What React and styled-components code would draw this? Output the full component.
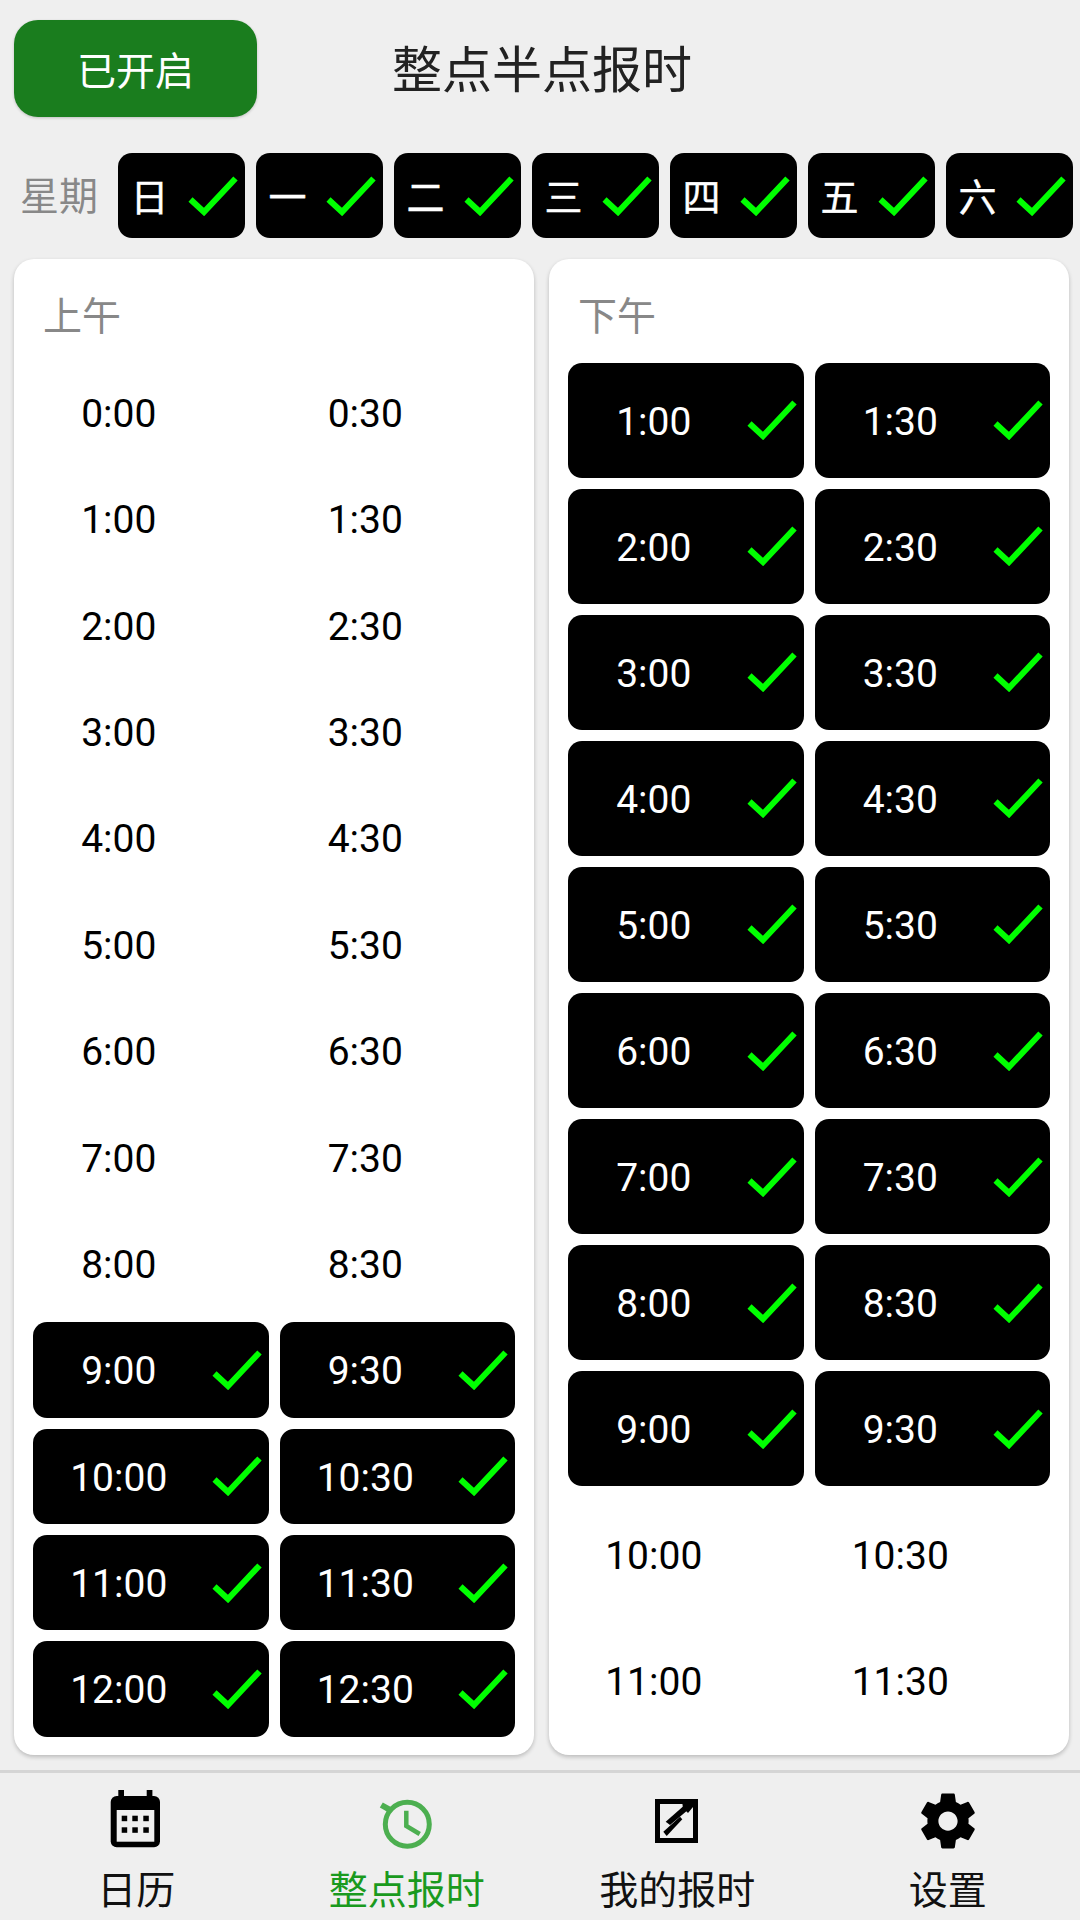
import React from 'react';
import styled, { createGlobalStyle } from 'styled-components';

const FONT = `Roboto, "Noto Sans CJK SC", sans-serif`;

const Global = createGlobalStyle`
  html, body { margin: 0; padding: 0; background: #efefef; }
  * { box-sizing: border-box; }
`;

const Page = styled.div`
  width: 1080px;
  height: 1920px;
  background: #efefef;
  font-family: ${FONT};
  display: flex;
  flex-direction: column;
  overflow: hidden;
`;

const Header = styled.header`
  display: flex;
  align-items: center;
  padding: 20px 0 0 14px;
`;

const StatusButton = styled.div`
  width: 243px;
  height: 97px;
  border-radius: 24px;
  background: #1a7d1e;
  color: #fff;
  font-size: 39px;
  display: flex;
  align-items: center;
  justify-content: center;
  padding-bottom: 2px;
  box-shadow: 0 1px 3px rgba(0, 0, 0, 0.2);
`;

const Title = styled.h1`
  margin: 0 0 0 135px;
  padding-top: 4px;
  font-size: 50px;
  line-height: 60px;
  font-weight: 400;
  color: #222;
`;

const WeekRow = styled.div`
  display: flex;
  align-items: center;
  margin-top: 36px;
  padding-left: 20px;
`;

const WeekLabel = styled.div`
  width: 98px;
  font-size: 39px;
  color: #888;
  padding-bottom: 5px;
`;

const WeekCells = styled.div`
  display: flex;
  gap: 11px;
`;

const WeekCell = styled.div`
  width: 127px;
  height: 85px;
  border-radius: 14px;
  background: #000;
  color: #fff;
  display: flex;
  align-items: center;
`;

const WeekText = styled.span`
  flex: 1;
  text-align: center;
  font-size: 38px;
  padding-bottom: 2px;
  -webkit-text-stroke: 0.4px #fff;
`;

const CheckSlot = styled.div`
  width: 64px;
  flex: none;
  display: flex;
  align-items: center;
  justify-content: flex-end;
  padding-right: 7px;
`;

const Columns = styled.main`
  display: grid;
  grid-template-columns: 520px 520px;
  gap: 15px;
  margin-top: 21px;
  padding-left: 14px;
`;

const Card = styled.section`
  height: 1496px;
  background: #fff;
  border-radius: 20px;
  box-shadow: 0 2px 4px rgba(0, 0, 0, 0.22);
  padding: 34px 19px 0;
`;

const CardLabel = styled.div`
  font-size: 39px;
  line-height: 46px;
  color: #888;
  padding-left: 10px;
  padding-top: 1px;
  margin-bottom: ${(p) => p.$gap}px;
`;

const TimeGrid = styled.div`
  display: grid;
  grid-template-columns: 1fr 1fr;
  grid-auto-rows: ${(p) => p.$rowHeight}px;
  gap: 11px;
`;

const TimeCell = styled.div`
  display: flex;
  align-items: center;
  border-radius: 14px;
  font-size: 39px;
  background: ${(p) => (p.$on ? '#000' : 'transparent')};
  color: ${(p) => (p.$on ? '#fff' : '#000')};
`;

const TimeText = styled.span`
  flex: 1;
  text-align: center;
  padding-top: 3px;
`;

const Nav = styled.nav`
  margin-top: 15px;
  height: 150px;
  border-top: 3px solid #d5d5d5;
  display: grid;
  grid-template-columns: repeat(4, 270.5px);
  padding-left: 1px;
`;

const NavItem = styled.div`
  display: flex;
  flex-direction: column;
  align-items: center;
  padding-top: 15px;
  color: ${(p) => (p.$active ? '#1a9a1e' : '#111')};
`;

const NavIcon = styled.svg`
  width: 66px;
  height: 66px;
  display: block;
`;

const NavLabel = styled.span`
  font-size: 39px;
  line-height: 46px;
  margin-top: 14px;
`;

const Check = () => (
  <svg width="50" height="40" viewBox="0 0 50 40" aria-hidden="true">
    <polyline points="2.5,23.5 16,36 47.5,2.5" fill="none" stroke="#00ff00" strokeWidth="6" />
  </svg>
);

const CalendarIcon = () => (
  <NavIcon viewBox="0 0 66 66">
    <rect x="7.7" y="8" width="49.3" height="51.3" rx="6" fill="#000" />
    <rect x="15.3" y="2" width="5.7" height="10" fill="#000" />
    <rect x="43.7" y="2" width="5.7" height="10" fill="#000" />
    <rect x="13.7" y="22" width="37.6" height="31.7" fill="#efefef" />
    {[18.7, 29.3, 40.3].flatMap((x) =>
      [27.7, 39.3].map((y) => <rect key={`${x}-${y}`} x={x} y={y} width="5.5" height="5.5" fill="#000" />)
    )}
  </NavIcon>
);

const ClockIcon = () => (
  <NavIcon viewBox="0 0 66 66" fill="none" stroke="#4caf50">
    <circle cx="33.3" cy="36.3" r="22" strokeWidth="5" />
    <polyline points="32.3,22.7 32.3,38 45.7,46" strokeWidth="4.5" />
    <line x1="7.3" y1="17" x2="17.3" y2="22.7" strokeWidth="6" />
  </NavIcon>
);

const EditIcon = () => (
  <NavIcon viewBox="0 0 66 66">
    <rect x="13.5" y="13.5" width="38" height="39" fill="none" stroke="#000" strokeWidth="5" />
    <polygon points="21.7,33.7 42.7,15.3 46,20.3 26,37" fill="#000" />
    <polygon points="38,13 49,13 49,19 44,25 39,20" fill="#000" />
    <polygon points="19.3,43.7 36,28.7 38.3,31.3 22.7,48" fill="#000" />
  </NavIcon>
);

const GearIcon = () => (
  <NavIcon viewBox="0 0 24 24">
    <path
      fill="#000"
      d="M19.43 12.98c.04-.32.07-.64.07-.98s-.03-.66-.07-.98l2.11-1.65c.19-.15.24-.42.12-.64l-2-3.46c-.12-.22-.39-.3-.61-.22l-2.49 1c-.52-.4-1.08-.73-1.69-.98l-.38-2.65C14.46 2.18 14.25 2 14 2h-4c-.25 0-.46.18-.49.42l-.38 2.65c-.61.25-1.17.59-1.69.98l-2.49-1c-.23-.09-.49 0-.61.22l-2 3.46c-.13.22-.07.49.12.64l2.11 1.65c-.04.32-.07.65-.07.98s.03.66.07.98l-2.11 1.65c-.19.15-.24.42-.12.64l2 3.46c.12.22.39.3.61.22l2.49-1c.52.4 1.08.73 1.69.98l.38 2.65c.03.24.24.42.49.42h4c.25 0 .46-.18.49-.42l.38-2.65c.61-.25 1.17-.59 1.69-.98l2.49 1c.23.09.49 0 .61-.22l2-3.46c.12-.22.07-.49-.12-.64l-2.11-1.65zM12 15.5c-1.93 0-3.5-1.57-3.5-3.5s1.57-3.5 3.5-3.5 3.5 1.57 3.5 3.5-1.57 3.5-3.5 3.5z"
    />
  </NavIcon>
);

const DAYS = ['日', '一', '二', '三', '四', '五', '六'];

const halfHours = (from, to) =>
  Array.from({ length: to - from + 1 }, (_, i) => from + i).flatMap((h) => [`${h}:00`, `${h}:30`]);

const TimeSlot = ({ time, on }) => (
  <TimeCell $on={on}>
    <TimeText>{time}</TimeText>
    <CheckSlot>{on && <Check />}</CheckSlot>
  </TimeCell>
);

const morning = halfHours(0, 12);
const afternoon = halfHours(1, 11);
const NAV = [
  { label: '日历', Icon: CalendarIcon },
  { label: '整点报时', Icon: ClockIcon, active: true },
  { label: '我的报时', Icon: EditIcon },
  { label: '设置', Icon: GearIcon },
];

export default function App() {
  return (
    <Page>
      <Global />
      <Header>
        <StatusButton>已开启</StatusButton>
        <Title>整点半点报时</Title>
      </Header>
      <WeekRow>
        <WeekLabel>星期</WeekLabel>
        <WeekCells>
          {DAYS.map((d) => (
            <WeekCell key={d}>
              <WeekText>{d}</WeekText>
              <CheckSlot>
                <Check />
              </CheckSlot>
            </WeekCell>
          ))}
        </WeekCells>
      </WeekRow>
      <Columns>
        <Card>
          <CardLabel $gap={24.6}>上午</CardLabel>
          <TimeGrid $rowHeight={95.4}>
            {morning.map((t) => (
              <TimeSlot key={t} time={t} on={parseInt(t, 10) >= 9} />
            ))}
          </TimeGrid>
        </Card>
        <Card>
          <CardLabel $gap={22.5}>下午</CardLabel>
          <TimeGrid $rowHeight={115.1}>
            {afternoon.map((t) => (
              <TimeSlot key={t} time={t} on={parseInt(t, 10) <= 9} />
            ))}
          </TimeGrid>
        </Card>
      </Columns>
      <Nav>
        {NAV.map(({ label, Icon, active }) => (
          <NavItem key={label} $active={active}>
            <Icon />
            <NavLabel>{label}</NavLabel>
          </NavItem>
        ))}
      </Nav>
    </Page>
  );
}
